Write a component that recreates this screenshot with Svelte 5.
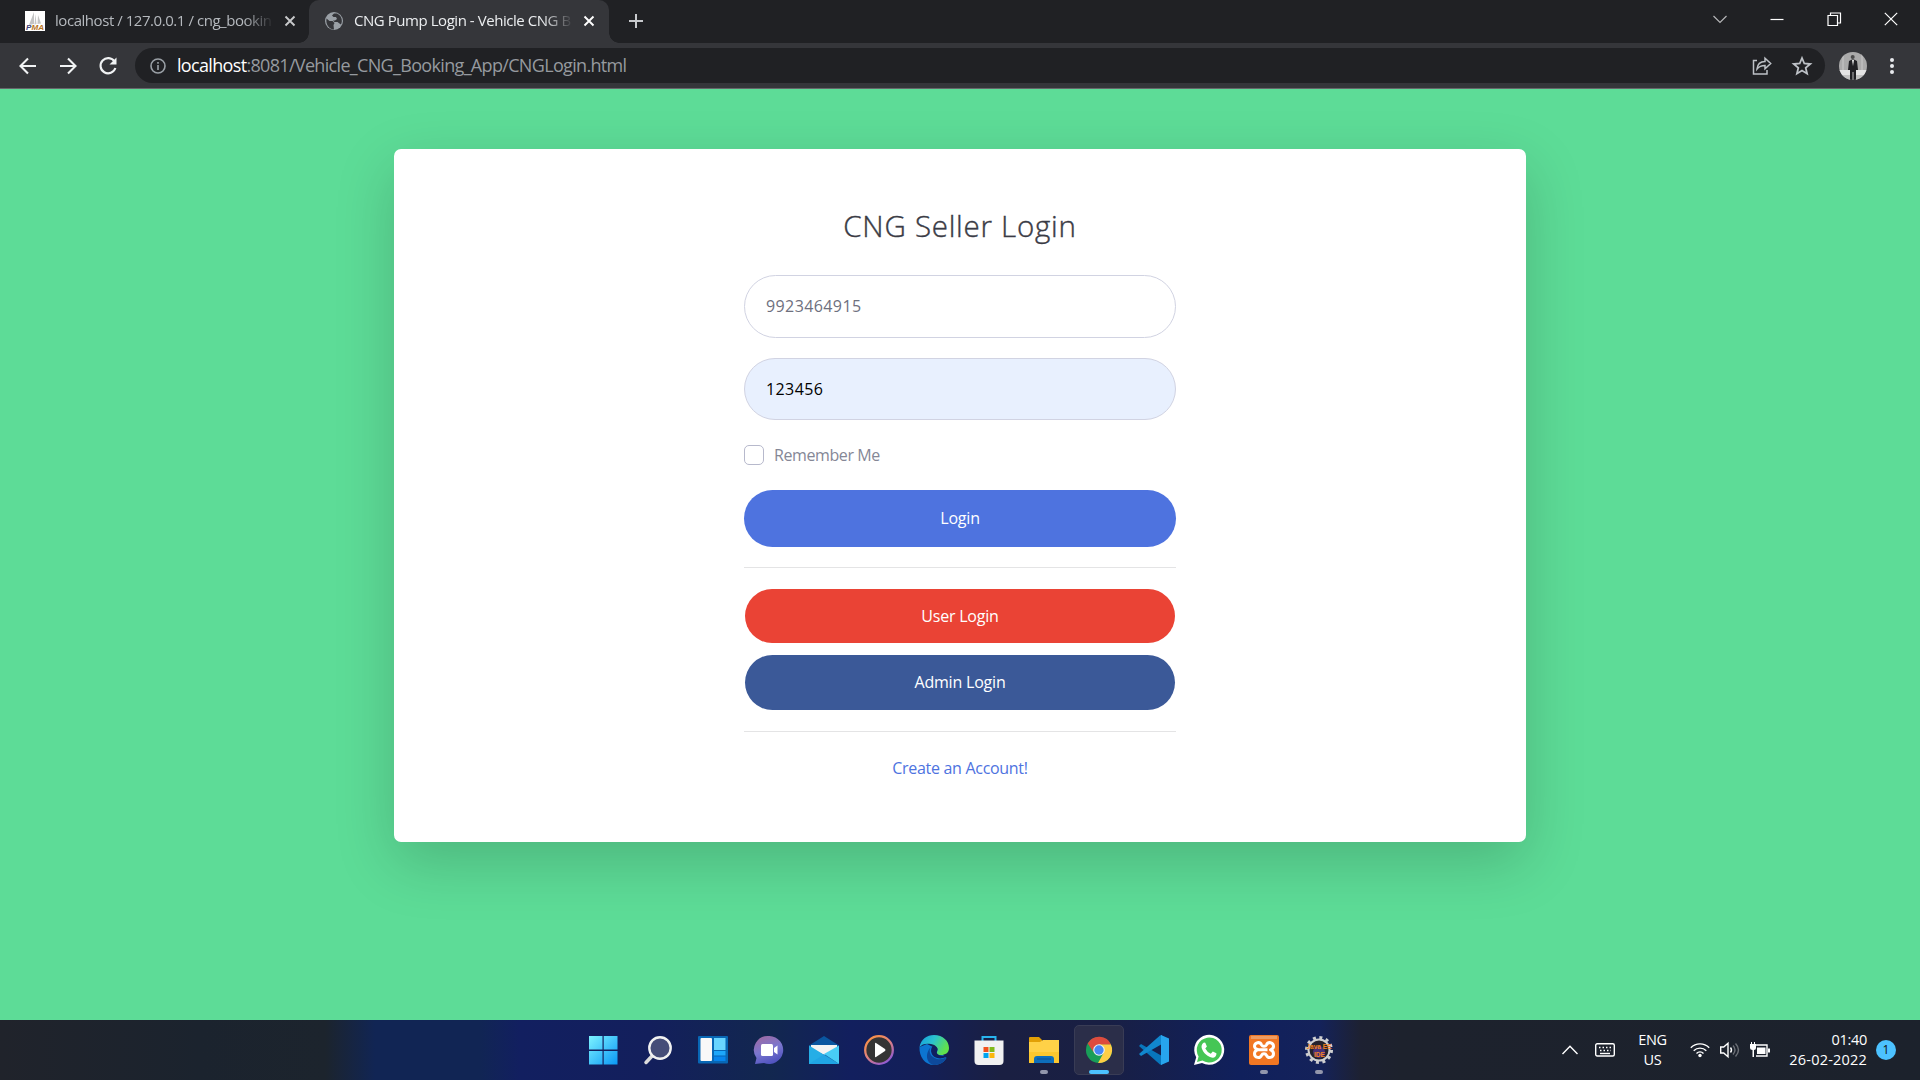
<script>
  const tabs = [
    { title: 'localhost / 127.0.0.1 / cng_bookin', active: false },
    { title: 'CNG Pump Login - Vehicle CNG B', active: true }
  ];
</script>

<div class="screen">
  <div class="tabbar">
    {#each tabs as tab}
      <div class="tab" class:active={tab.active}>
        {#if tab.active}
          <svg class="fav globe" viewBox="0 0 20 20"><circle cx="10" cy="10" r="9" fill="#9aa0a6" /><path d="M2.500 7.500l3 2.500h3l2 2-1 2 .5 4.500c-5-.5-8.500-5-7.500-11zM10 2.500L8 4.500l1.500 1.500 2.500 0 1 2-2 1.500h-2l1.500 1.500h3l2 1.500 1.500 1c2-4 .5-9-4-11z" fill="#35363a" /></svg>
        {:else}
          <svg class="fav" viewBox="0 0 20 20"><rect width="20" height="20" fill="#fff" /><path d="M9 1v12l-5 1zM10.500 3l1 10-2 .5zM13 4l3 8.500-3.500.5z" fill="#c4c4c4" /><text x="1" y="18.500" textLength="18" lengthAdjust="spacingAndGlyphs" class="pma"><tspan fill="#3f3f78">P</tspan><tspan fill="#b8741c">MA</tspan></text></svg>
        {/if}
        <span class="title">{tab.title}</span>
        <svg class="close" viewBox="0 0 12 12"><path d="M1.500 1.500l9 9M10.500 1.500l-9 9" /></svg>
      </div>
    {/each}
    <svg class="plus" viewBox="0 0 16 16"><path d="M8 1v14M1 8h14" /></svg>
    <div class="winctl">
      <svg viewBox="0 0 14 14"><path d="M.5 4l6.500 6.500L13.500 4" stroke="#b5b6b8" /></svg>
      <svg viewBox="0 0 14 14"><path d="M.5 7.500h13" /></svg>
      <svg viewBox="0 0 14 14"><path d="M1 3.500h9.500V13.500H1zM3.500 3.500V1h10v10h-3" /></svg>
      <svg viewBox="0 0 14 14"><path d="M.8.8l12.400 12.400M13.200.8L.8 13.200" /></svg>
    </div>
  </div>

  <div class="toolbar">
    <svg class="nav" viewBox="0 0 20 20"><path d="M18 10H3M10 2.500L2.500 10l7.500 7.500" /></svg>
    <svg class="nav" viewBox="0 0 20 20"><path d="M2 10h15M10 2.500l7.500 7.500-7.500 7.500" /></svg>
    <svg class="nav" viewBox="0 0 20 20"><path d="M16.500 5.500A7.600 7.600 0 1 0 17.400 12" /><path d="M18.500 1.500v7h-7z" class="tip" /></svg>
    <div class="omnibox">
      <svg class="info" viewBox="0 0 16 16"><circle cx="8" cy="8" r="7" /><path d="M8 7v5M8 4v1.700" /></svg>
      <span class="url"><b>localhost</b>:8081/Vehicle_CNG_Booking_App/CNGLogin.html</span>
      <svg class="share" viewBox="0 0 20 20"><path d="M5 4.500H1.500V18h13.500v-4M5 13c.5-5 3.500-7.500 8-7.500V2.200L18.700 7.500 13 12.800V9.500C9.500 9.500 7 10.500 5 13z" /></svg>
      <svg class="star" viewBox="0 0 20 20"><path d="M10 2l2.300 5.500 6 .5-4.600 3.900 1.400 5.800L10 14.600l-5.100 3.100 1.400-5.800L1.700 8l6-.5z" /></svg>
    </div>
    <svg class="avatar" viewBox="0 0 28 28">
      <defs><clipPath id="face"><circle cx="14" cy="14" r="14" /></clipPath></defs>
      <g clip-path="url(#face)"><rect width="28" height="28" fill="#aaa" /><path d="M0 18h28v5H0z" fill="#e4e4e4" /><path d="M0 23h28v5H0z" fill="#c2c2c2" /><path d="M4 0v18M23 0v18" stroke="#c9c9c9" /><circle cx="13.700" cy="5" r="2" fill="#4b4b4b" /><path d="M10 9l3-1.500h2L18 9l1 9h-2v10h-6V18H9z" fill="#202024" /><path d="M13 8h2l-1 6z" fill="#eee" /><path d="M14 20v8" stroke="#bbb" /></g>
    </svg>
    <svg class="dots" viewBox="0 0 6 18"><circle cx="3" cy="3" r="2" /><circle cx="3" cy="9" r="2" /><circle cx="3" cy="15" r="2" /></svg>
  </div>

  <main>
    <section class="card">
      <h1>CNG Seller Login</h1>
      <div class="field"><span class="ph">9923464915</span></div>
      <div class="field filled"><span>123456</span></div>
      <label class="remember"><i></i><span>Remember Me</span></label>
      <button class="btn primary"><span>Login</span></button>
      <hr />
      <button class="btn user"><span>User Login</span></button>
      <button class="btn admin"><span>Admin Login</span></button>
      <hr class="second" />
      <a class="create" href="#create">Create an Account!</a>
    </section>
  </main>

  <footer>
    <div class="apps">
      <div class="app"><svg viewBox="0 0 30 30"><defs><linearGradient id="win" x2="1" y2="1"><stop stop-color="#7df3ff" /><stop offset="1" stop-color="#0a97f5" /></linearGradient></defs><path d="M1 1h13.500v13.500H1zM15.700 1H29.500v13.500H15.700zM1 16h13.500v13.500H1zM15.700 16H29.500v13.500H15.700z" fill="url(#win)" /></svg></div>
      <div class="app"><svg viewBox="0 0 30 30"><path d="M10 20L3 27.500" stroke="#dcdcdc" stroke-width="3.500" stroke-linecap="round" /><circle cx="17" cy="13" r="10.700" fill="#454d78" stroke="#f1f1f1" stroke-width="2.400" /></svg></div>
      <div class="app"><svg viewBox="0 0 30 30"><rect y="1" width="30" height="27.500" rx="1" fill="#0867b5" /><rect x="2.500" y="3" width="11.500" height="23" rx="1" fill="#f8f8f8" /><path d="M16 3h11.500v12H16z" fill="#69d5ff" /><path d="M16 16h11.500v4.500H16z" fill="#1da7fa" /><path d="M16 21.500h11.500V26H16z" fill="#0785ed" /></svg></div>
      <div class="app"><svg viewBox="0 0 30 30"><defs><linearGradient id="chat" x1=".1" x2=".5" y2="1"><stop stop-color="#a0699f" /><stop offset=".55" stop-color="#7a76cf" /><stop offset="1" stop-color="#5154bf" /></linearGradient></defs><path d="M15.500 1A14 14 0 1 1 10 28L1 29l1.500-6A14 14 0 0 1 15.500 1z" fill="url(#chat)" /><rect x="7" y="9" width="12" height="12" rx="1.500" fill="#fff" /><path d="M20 13l3.500-2.500v9L20 17z" fill="#fff" /></svg></div>
      <div class="app"><svg viewBox="0 0 30 30"><path d="M0 10.500L15 1l15 9.500V14H0z" fill="#0a56a0" /><path d="M2 10h26v4L15.500 20 2 14z" fill="#f3f3f3" /><path d="M0 10.500L30 29H0z" fill="#25aee6" /><path d="M30 10.500V29L15 19z" fill="#48cdf6" /><path d="M0 29l15.500-10L30 29z" fill="#1e9ee2" opacity=".6" /></svg></div>
      <div class="app"><svg viewBox="0 0 30 30"><defs><linearGradient id="med" x2=".7" y2="1"><stop stop-color="#ff9438" /><stop offset=".55" stop-color="#dd8180" /><stop offset="1" stop-color="#915bd0" /></linearGradient></defs><circle cx="15" cy="15" r="13.800" fill="#343434" stroke="url(#med)" stroke-width="2.300" /><path d="M11 8.500q0-1 1-.5l9 6q1 1 0 2l-9 6q-1 .5-1-.5z" fill="#fff" /></svg></div>
      <div class="app"><svg viewBox="0 0 30 30"><defs><linearGradient id="e1" x2="1" y2=".4"><stop stop-color="#139ddf" /><stop offset=".5" stop-color="#2bc2ce" /><stop offset="1" stop-color="#60e24d" /></linearGradient></defs><path d="M.5 12C0 22 6 30 15 30c5 0 10-2.500 12.500-7L18 14 8 9z" fill="#0c75d1" /><path d="M.5 12C2 4 8 0 15 0c9 0 15 6 15 13 0 5-4 7-8 7-4 0-5-1-4-3 2-4-1-7-6-8C7 8 3 9 .5 12z" fill="url(#e1)" /><path d="M12 12c-3 4-1 10 6 12 4 1 8-.5 9.500-2C25 28 20 30 15 30 8 29 5 19 12 12z" fill="#0d499b" /><path d="M13 12c2-1 5 0 5.500 2 .3 2-1.500 3 0 5 2 2 6 2 9 1l-.5 2c-6 3-13 1-14.500-4-.7-2-.5-4 .5-6z" fill="#101f60" /></svg></div>
      <div class="app"><svg viewBox="0 0 30 30"><path d="M8.500 6V2h13v4" fill="none" stroke="#28b4ef" stroke-width="2" /><path d="M.5 5.500h29V26q0 4-4 4h-21q-4 0-4-4z" fill="#f1f1f1" /><path d="M9.500 12h5v5h-5z" fill="#f1511b" /><path d="M15.500 12h5v5h-5z" fill="#80b91a" /><path d="M9.500 18h5v5h-5z" fill="#00a4ef" /><path d="M15.500 18h5v5h-5z" fill="#fbb70b" /></svg></div>
      <div class="app open"><svg viewBox="0 0 30 30"><path d="M0 3q0-1 1-1h9l3 3v3H0z" fill="#e2a006" /><path d="M0 7h11l3-2h16v23H0z" fill="#ffd147" /><path d="M0 17h30v11H0z" fill="#fcc72f" /><path d="M5 28v-4q0-3 3-3h14q3 0 3 3v4z" fill="#0d6ebc" /><path d="M8 24h14" stroke="#0a4e96" /></svg></div>
      <div class="app current"><svg viewBox="0 0 30 30"><circle cx="15" cy="15" r="14" fill="#199e58" /><path d="M2.900 8A14 14 0 0 1 28 9.500H15a6 6 0 0 0-5.500 8.500z" fill="#dd4b3e" /><path d="M15 9h12.700A14 14 0 0 1 14 29l6.300-11.500z" fill="#ffce44" /><circle cx="15" cy="15" r="6.200" fill="#f1f1f1" /><circle cx="15" cy="15" r="5" fill="#4687f4" /></svg></div>
      <div class="app"><svg viewBox="0 0 30 30"><path d="M2 9L0 11l21 18.500 2 .5V21z" fill="#0876bc" /><path d="M2 21L0 19 21 .5 23 0v9z" fill="#1187ce" /><path d="M22 0l8 3.500v23L22 30z" fill="#27a5ed" /></svg></div>
      <div class="app"><svg viewBox="0 0 30 30"><path d="M0 30l2.200-7.700A15 15 0 1 1 8 28z" fill="#fff" /><path d="M3 27l1.600-5.500A12.500 12.500 0 1 1 8.500 25.500z" fill="#45c655" /><path d="M10 7.500l1.300.3 1.600 3.700-1.600 2q2 4 5.500 5.200l2-2.200 3.600 1.700c.3 4-3 4.800-5 4.300C12 21 8 16 7.500 12c0-2 1-4 2.500-4.500z" fill="#fff" /></svg></div>
      <div class="app open"><svg viewBox="0 0 30 30"><rect width="30" height="30" rx="2" fill="#f17723" /><path d="M2 1h26v3H2z" fill="#ed9c62" /><path d="M11.500 14.800h7M12 14.800c-3 0-6.500-1-6.500-3.500 0-4 5.500-5 7-1.500 1 2 4 2 5 0 1.500-3.500 7-2.500 7 1.500 0 1.500-1.500 3-3 3.500 1.500.5 3 2 3 4 0 4-5.500 5-7 1.500-1-2-4-2-5 0-1.500 3.500-7 2.500-7-1.500 0-2 1.500-3.500 3-4" fill="none" stroke="#fff" stroke-width="3" stroke-linejoin="round" /></svg></div>
      <div class="app open"><svg viewBox="0 0 30 30"><circle cx="15" cy="15" r="10.500" fill="#24222d" stroke="#cfcfd0" stroke-width="2" /><circle cx="15" cy="15" r="12.500" fill="none" stroke="#cfcfd0" stroke-width="3" stroke-dasharray="3 3.545" /><circle cx="15" cy="17" r="6" fill="#483177" /><text x="2.500" y="14" class="java" textLength="25" lengthAdjust="spacingAndGlyphs">Java EE</text><text x="10" y="21.500" class="java" textLength="11" lengthAdjust="spacingAndGlyphs">IDE</text></svg></div>
    </div>
    <div class="tray">
      <svg class="chev" viewBox="0 0 16 10"><path d="M.5 9L8 1.300 15.500 9" /></svg>
      <svg class="kbd" viewBox="0 0 20 14"><rect x=".7" y=".7" width="18.600" height="12.300" rx="1.500" /><path d="M4 4.500h13M5 7.500h11" stroke-dasharray="1.500 2" /><path d="M5 10.500h10" /></svg>
      <div class="lang"><span>ENG</span><span>US</span></div>
      <svg class="wifi" viewBox="0 0 20 16"><path d="M.8 5.700a13 13 0 0 1 18.400 0M3.700 8.700a9 9 0 0 1 12.600 0M6.500 11.500a5 5 0 0 1 7 0" /><circle cx="10" cy="13.500" r="1.700" fill="#fff" stroke="none" /></svg>
      <svg class="vol" viewBox="0 0 20 16"><path d="M.7 5h3L8 1.300v13.400L3.700 11h-3zM10.500 5.500q2 2.500 0 5" /><path d="M13 3.500q4 4.500 0 9M15.500 1.500q6 6.500 0 13" opacity=".35" /></svg>
      <svg class="bat" viewBox="0 0 20 16"><path d="M6 3h11v11H6" /><path d="M7 5.500h8.500v6.500H7zM18 6.500h2v4h-2zM0 2h6v4q0 2-2 2v7H2.500V8Q0 8 0 6zM1 0h1v2H1zM4 0h1v2H4z" fill="#fff" stroke="none" /></svg>
      <div class="clock"><span>01:40</span><span class="date">26-02-2022</span></div>
      <span class="badge">1</span>
    </div>
  </footer>
</div>

<style>
  :global(body) { margin: 0; background: #5ddc97; }
  .screen { width: 1920px; height: 1080px; display: flex; flex-direction: column; overflow: hidden; font-family: 'Open Sans', 'Noto Sans', sans-serif; }
  svg { display: block; flex: none; fill: none; overflow: visible; }
  .tabbar { height: 43px; flex: none; background: #202124; display: flex; align-items: stretch; }
  .tab { width: 309px; box-sizing: border-box; display: flex; align-items: center; padding: 0 13px 2px 25px; color: #b5b9be; font-size: 15px; position: relative; }
  .tab.active { width: 300px; padding-left: 15px; padding-right: 14px; color: #eceef0; background: #35363a; border-radius: 10px 10px 0 0; }
  .tab.active::before, .tab.active::after { content: ''; position: absolute; bottom: 0; width: 10px; height: 10px; }
  .tab.active::before { left: -10px; background: radial-gradient(circle at 0 0, transparent 9.500px, #35363a 10px); }
  .tab.active::after { right: -10px; background: radial-gradient(circle at 100% 0, transparent 9.500px, #35363a 10px); }
  .fav { width: 20px; height: 20px; }
  .pma { font: italic 900 8px 'Liberation Sans', sans-serif; }
  .title { flex: 1; margin-left: 10px; white-space: nowrap; line-height: 24px; margin-top: -1px; letter-spacing: -.45px; min-width: 0; -webkit-mask-image: linear-gradient(90deg, #000 calc(100% - 30px), transparent); mask-image: linear-gradient(90deg, #000 calc(100% - 30px), transparent); }
  .close { width: 12px; height: 12px; margin-left: 10px; stroke: #c8c9cb; stroke-width: 1.900; }
  .active .close { stroke: #fff; }
  .plus { width: 16px; height: 16px; margin: 13px 0 0 19px; stroke: #c8cacd; stroke-width: 2; }
  .winctl { margin-left: auto; display: flex; align-items: center; gap: 43px; padding: 0 22px 6px 0; }
  .winctl svg { width: 14px; height: 14px; stroke: #fff; stroke-width: 1.200; }
  .toolbar { height: 45px; flex: none; box-sizing: content-box; border-bottom: 1px solid #65676a; background: #35363a; display: flex; align-items: center; padding-left: 18px; }
  .nav { width: 20px; height: 20px; margin-right: 20px; stroke: #f1f3f4; stroke-width: 2.100; }
  .nav .tip { fill: #f1f3f4; stroke: none; }
  .omnibox { width: 1690px; margin-left: -3px; height: 35px; border-radius: 18px; background: #202124; display: flex; align-items: center; box-sizing: border-box; padding: 0 13px 0 15px; }
  .info { width: 16px; height: 16px; stroke: #9aa0a6; stroke-width: 1.600; }
  .url { margin: -1px 0 0 11px; flex: 1; color: #969a9f; font-size: 18px; letter-spacing: -.67px; white-space: nowrap; line-height: 24px; }
  .url b { font-weight: 400; color: #fff; }
  .share, .star { width: 20px; height: 20px; stroke: #bdc1c6; stroke-width: 1.500; }
  .star { margin-left: 20px; stroke-width: 1.800; }
  .avatar { width: 28px; height: 28px; margin-left: 14px; }
  .dots { width: 6px; height: 18px; margin-left: 22px; fill: #e8eaed; }
  main { flex: 1; background: #5ddc97; padding-top: 60px; display: flex; justify-content: center; align-items: flex-start; min-height: 0; }
  .card { width: 1132px; height: 693px; background: #fff; border-radius: 7px; box-shadow: 0 20px 60px rgba(0, 0, 0, .175); display: flex; flex-direction: column; align-items: center; box-sizing: border-box; padding-top: 59px; font-family: 'Open Sans', sans-serif; font-size: 16px; }
  h1 { margin: 0 0 31px; height: 36px; line-height: 36px; font-size: 29.500px; font-weight: 300; letter-spacing: .75px; -webkit-text-stroke: .4px #3a3b45; color: #3a3b45; white-space: nowrap; }
  .field { width: 432px; height: 63px; box-sizing: border-box; border: 1px solid #d1d3e2; border-radius: 32px; display: flex; align-items: center; padding: 0 21px 2px; margin-bottom: 20px; color: #6e707e; letter-spacing: .4px; }
  .filled { height: 62px; padding-bottom: 0; background: #e8f0fe; color: #000; }
  .field span { display: block; }
  .remember { width: 432px; height: 20px; margin-top: 5px; display: flex; align-items: center; color: #858796; letter-spacing: -.4px; }
  .remember i { width: 20px; height: 20px; box-sizing: border-box; border: 1px solid #b7b9cc; border-radius: 5px; margin-right: 10px; }
  .btn { border: 0; padding: 0 0 1px; color: #fff; font: 400 16px 'Open Sans', sans-serif; letter-spacing: -.2px; width: 430px; border-radius: 32px; }
  .primary { width: 432px; height: 57px; padding-bottom: 2px; margin-top: 25px; background: #4e73df; }
  .user { height: 54px; background: #ea4335; }
  .admin { height: 55px; margin-top: 12px; background: #3b5998; }
  hr { width: 432px; height: 1px; border: 0; background: #e4e4e5; margin: 20px 0 21px; }
  .second { margin: 21px 0 24px; }
  .create { color: #4e73df; text-decoration: none; line-height: 24px; letter-spacing: -.3px; }
  footer { height: 60px; flex: none; display: grid; grid-template-columns: 1fr auto; position: relative; background: linear-gradient(90deg, #20232b 0, #1b232e 200px, #1c242d 325px, #112554 375px, #112554 480px, #121f60 520px, #131f5c 650px, #12274f 770px, #121f5e 850px, #131f58 920px, #1a1f42 1000px, #191f43 1100px, #10205c 1240px, #14225a 1320px, #1d2132 1360px, #1d222d 1400px, #1c222c); }
  .apps { display: flex; align-items: center; gap: 5.060px; padding-left: 578.400px; }
  .app { width: 50px; height: 50px; box-sizing: border-box; display: flex; align-items: center; justify-content: center; position: relative; border-radius: 5px; }
  .app svg { width: 30px; height: 30px; }
  .app.current { background: #2b2e49; border: 1px solid #393c55; }
  .current svg { width: 28px; height: 28px; }
  .open::after, .current::after { content: ''; position: absolute; left: 21px; bottom: 1px; width: 8px; height: 4px; border-radius: 2px; background: #9296ac; }
  .current::after { left: 14px; bottom: 0; width: 20px; background: #4cc2ff; }
  .java { font: 700 6.500px 'Liberation Sans', sans-serif; fill: #f5821f; }
  .tray { display: flex; align-items: center; padding-right: 24px; color: #fff; font-size: 14.500px; }
  .tray svg { stroke: #fff; stroke-width: 1.400; }
  .chev { width: 16px; height: 10px; }
  .kbd { width: 20px; height: 14px; margin-left: 17px; }
  .lang { width: 29px; margin-left: 23px; }
  .lang, .clock { display: flex; flex-direction: column; align-items: center; line-height: 20px; letter-spacing: -.3px; }
  .wifi { width: 20px; height: 16px; margin-left: 23px; }
  .vol { width: 20px; height: 16px; margin-left: 10px; }
  .bat { width: 20px; height: 16px; margin-left: 10px; }
  .clock { align-items: flex-end; margin-left: 19px; width: 78px; white-space: nowrap; }
  .date { letter-spacing: .2px; }
  .badge { width: 20px; height: 20px; margin-left: 9px; border-radius: 50%; background: #4cc2ff; color: #111; font-size: 12px; line-height: 20px; text-align: center; }
</style>
